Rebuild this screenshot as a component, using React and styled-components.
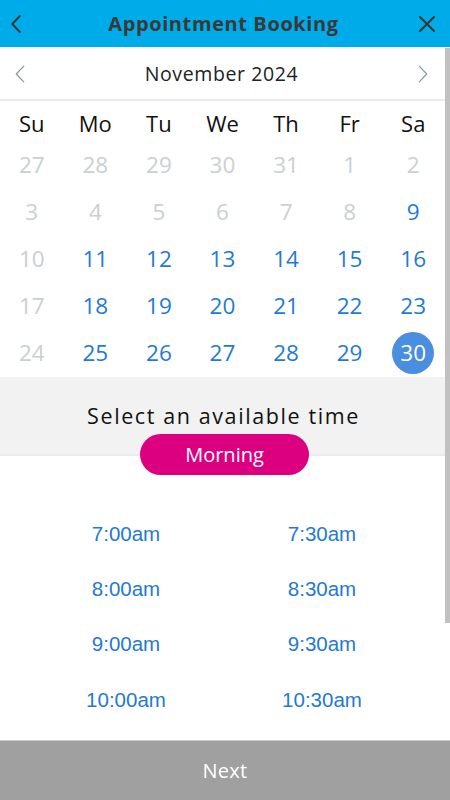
import React, { useState } from 'react'
import styled, { createGlobalStyle } from 'styled-components'

const GlobalStyle = createGlobalStyle`
  html, body {
    margin: 0;
    padding: 0;
    background: #ffffff;
  }
  * {
    box-sizing: border-box;
  }
`

const WEEKDAYS = ['Su', 'Mo', 'Tu', 'We', 'Th', 'Fr', 'Sa']

// 27 Oct .. 30 Nov; everything before the 9th is unavailable
const DAYS = [
  27, 28, 29, 30, 31, 1, 2,
  3, 4, 5, 6, 7, 8, 9,
  10, 11, 12, 13, 14, 15, 16,
  17, 18, 19, 20, 21, 22, 23,
  24, 25, 26, 27, 28, 29, 30,
].map((day, i) => ({
  key: i,
  day,
  available: i >= 13 && i % 7 !== 0,
}))

const TIMES = ['7:00am', '7:30am', '8:00am', '8:30am', '9:00am', '9:30am', '10:00am', '10:30am']

function Chevron({ dir, color, weight }) {
  const d = dir === 'left' ? 'M8 1 L1 8.5 L8 16' : 'M1 1 L8 8.5 L1 16'
  return (
    <svg width="10" height="18" viewBox="0 0 9 17">
      <path d={d} fill="none" stroke={color} strokeWidth={weight} strokeLinecap="round" strokeLinejoin="round" />
    </svg>
  )
}

function CloseIcon() {
  return (
    <svg width="18" height="18" viewBox="0 0 18 18">
      <path d="M2 2 L16 16 M16 2 L2 16" stroke="#3a3530" strokeWidth="2" strokeLinecap="round" />
    </svg>
  )
}

function App() {
  const [selected, setSelected] = useState(34)

  return (
    <>
      <GlobalStyle />
      <Page>
        <Header>
          <IconButton>
            <Chevron dir="left" color="#3a3530" weight={1.8} />
          </IconButton>
          <Title>Appointment Booking</Title>
          <IconButton>
            <CloseIcon />
          </IconButton>
        </Header>

        <Body>
          <Content>
            <MonthNav>
              <NavArrow>
                <Chevron dir="left" color="#8c9aa1" weight={1.2} />
              </NavArrow>
              <MonthLabel>November 2024</MonthLabel>
              <NavArrow>
                <Chevron dir="right" color="#8c9aa1" weight={1.2} />
              </NavArrow>
            </MonthNav>

            <WeekdayRow>
              {WEEKDAYS.map((w) => (
                <Weekday key={w}>{w}</Weekday>
              ))}
            </WeekdayRow>

            <DayGrid>
              {DAYS.map((d) => (
                <DayCell key={d.key}>
                  <DayNumber
                    $available={d.available}
                    $selected={selected === d.key}
                    onClick={() => d.available && setSelected(d.key)}
                  >
                    {d.day}
                  </DayNumber>
                </DayCell>
              ))}
            </DayGrid>

            <TimeHeader>
              <TimeHeading>Select an available time</TimeHeading>
              <PeriodPill>Morning</PeriodPill>
            </TimeHeader>

            <SlotGrid>
              {TIMES.map((t) => (
                <Slot key={t}>{t}</Slot>
              ))}
            </SlotGrid>
          </Content>

          <ScrollTrack>
            <ScrollThumb />
          </ScrollTrack>
        </Body>

        <Footer>Next</Footer>
      </Page>
    </>
  )
}

const Page = styled.div`
  width: 450px;
  height: 800px;
  display: flex;
  flex-direction: column;
  overflow: hidden;
  font-family: 'Open Sans', 'Noto Sans', sans-serif;
`

const Header = styled.div`
  height: 48px;
  flex-shrink: 0;
  background: #00abea;
  display: flex;
  align-items: center;
  justify-content: space-between;
  padding: 0 8px 0 1px;
  border-bottom: 1px solid #e9f6fb;
`

const IconButton = styled.div`
  width: 30px;
  height: 40px;
  display: flex;
  align-items: center;
  justify-content: center;
  cursor: pointer;
`

const Title = styled.h1`
  margin: 0 0 0 4px;
  font-family: 'Open Sans', sans-serif;
  font-size: 20px;
  font-weight: 700;
  letter-spacing: 0.6px;
  color: #3b3936;
`

const Body = styled.div`
  flex: 1;
  display: flex;
  min-height: 0;
`

const Content = styled.div`
  width: 445px;
  display: flex;
  flex-direction: column;
`

const ScrollTrack = styled.div`
  width: 5px;
  background: #ffffff;
`

const ScrollThumb = styled.div`
  height: 575px;
  background: #c1c1c1;
`

const MonthNav = styled.div`
  height: 53px;
  flex-shrink: 0;
  display: flex;
  align-items: center;
  justify-content: space-between;
  padding: 0 14px 0 12px;
  border-bottom: 2px solid #e8ebee;
`

const NavArrow = styled.div`
  width: 16px;
  display: flex;
  justify-content: center;
  cursor: pointer;
`

const MonthLabel = styled.div`
  font-size: 19.5px;
  color: #222222;
  letter-spacing: 0.6px;
`

const WeekdayRow = styled.div`
  display: grid;
  grid-template-columns: repeat(7, 1fr);
  height: 40px;
  flex-shrink: 0;
  margin-top: 2px;
  align-items: center;
`

const Weekday = styled.div`
  text-align: center;
  font-size: 22px;
  color: #111111;
`

const DayGrid = styled.div`
  display: grid;
  grid-template-columns: repeat(7, 1fr);
  grid-auto-rows: 47px;
  margin-top: -2px;
  padding-bottom: 1px;
`

const DayCell = styled.div`
  display: flex;
  align-items: center;
  justify-content: center;
`

const DayNumber = styled.div`
  width: 42px;
  height: 42px;
  border-radius: 50%;
  display: flex;
  align-items: center;
  justify-content: center;
  font-size: 22.5px;
  color: ${(p) => (p.$selected ? '#ffffff' : p.$available ? '#1f7ad3' : '#c9d0d3')};
  background: ${(p) => (p.$selected ? '#4a8ee0' : 'transparent')};
  cursor: ${(p) => (p.$available ? 'pointer' : 'default')};
`

const TimeHeader = styled.div`
  background: #f2f2f2;
  border-bottom: 2px solid #e9ecef;
  display: flex;
  flex-direction: column;
  align-items: center;
  padding-top: 25px;
  height: 79px;
  flex-shrink: 0;
`

const TimeHeading = styled.div`
  font-size: 21.5px;
  line-height: 28px;
  letter-spacing: 1.6px;
  color: #111111;
  flex-shrink: 0;
  margin-left: 2px;
`

const PeriodPill = styled.div`
  flex-shrink: 0;
  margin: 4px 0 0 4px;
  width: 169px;
  height: 41px;
  border-radius: 21px;
  background: #dc0080;
  color: #ffffff;
  font-size: 20px;
  display: flex;
  align-items: center;
  justify-content: center;
  position: relative;
  z-index: 1;
`

const SlotGrid = styled.div`
  display: grid;
  grid-template-columns: 196px 196px;
  grid-auto-rows: 55.3px;
  padding: 50px 0 0 28px;
`

const Slot = styled.div`
  display: flex;
  align-items: center;
  justify-content: center;
  font-family: 'Liberation Sans', Arial, sans-serif;
  font-size: 20.5px;
  color: #1f7ad3;
  cursor: pointer;
`

const Footer = styled.div`
  height: 60px;
  flex-shrink: 0;
  background: #a0a0a0;
  border-top: 1px solid #c9c9c9;
  display: flex;
  align-items: center;
  justify-content: center;
  color: #ffffff;
  font-size: 20px;
  letter-spacing: 0.3px;
`

export default App
